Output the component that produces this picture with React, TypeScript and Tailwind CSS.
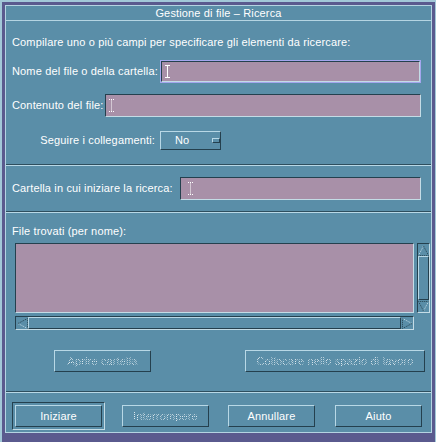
import React from 'react';

const raised = 'border border-t-[#b8d8e6] border-l-[#b8d8e6] border-r-[#24404e] border-b-[#24404e]';
const sunken = 'border border-t-[#24404e] border-l-[#24404e] border-r-[#c4dce6] border-b-[#c4dce6]';
const stipple =
  'bg-[image:repeating-conic-gradient(#dfeaf0_0%_25%,transparent_0%_50%)] bg-[length:2px_2px] bg-clip-text text-transparent';

function IBeam({ solid }: { solid?: boolean }) {
  return (
    <svg width="7" height="13" viewBox="0 0 7 13" className="shrink-0">
      <path
        d="M1 0.5H6M3.5 0.5V12.5M1 12.5H6"
        stroke="#ffffff"
        strokeWidth="1"
        strokeDasharray={solid ? undefined : '1 1'}
        fill="none"
      />
    </svg>
  );
}

function Field({ width, focused, pad = 'pl-[2px]' }: { width: string; focused?: boolean; pad?: string }) {
  const box = (
    <div className={`flex h-full w-full items-center bg-[#a890a8] ${pad} ${sunken}`}>
      <IBeam solid={focused} />
    </div>
  );
  if (focused) {
    return <div className={`h-[23px] ${width} border border-[#a4a6ee]`}>{box}</div>;
  }
  return <div className={`h-[23px] ${width}`}>{box}</div>;
}

function Arrow({ dir }: { dir: 'up' | 'down' | 'left' | 'right' }) {
  const rot =
    dir === 'up' ? '' : dir === 'down' ? 'rotate-180' : dir === 'left' ? '-rotate-90' : 'rotate-90';
  return (
    <svg width="11" height="11" viewBox="0 0 11 11" className={`shrink-0 ${rot}`}>
      <path d="M5.5 1L0.5 10.5" stroke="#c8e0ea" strokeDasharray="1 1" fill="none" />
      <path d="M5.5 1L10.5 10.5H0.5" stroke="#24404e" strokeDasharray="1 1" fill="none" />
    </svg>
  );
}

function Separator() {
  return <div className="h-[2px] shrink-0 border-t border-b border-t-[#2e4e5e] border-b-[#b8d8e6]" />;
}

function Button({ label, width, disabled }: { label: string; width: string; disabled?: boolean }) {
  return (
    <div className={`flex h-[22px] ${width} items-center justify-center ${raised}`}>
      <span className={disabled ? stipple : 'text-white'}>{label}</span>
    </div>
  );
}

export default function App() {
  return (
    <div className="h-[442px] w-[436px] border-l-2 border-t-2 border-r border-[#a2c8d8] bg-[#5a5a8e] pb-[9px] pl-[3px] pr-[3px] pt-[3px] font-['Liberation_Sans',Arial,sans-serif] text-[11px] tracking-[0.15px] text-white">
      <div className="flex h-full flex-col border border-[#b4d4e2] bg-[#5a8ea8]">
        <div className="h-[15px] shrink-0 border-b border-[#b4d4e2] text-center leading-[14px]">
          Gestione di file – Ricerca
        </div>

        <div className="flex flex-col pl-[6px]">
          <div className="mt-[14px] h-[14px] leading-[14px]">
            Compilare uno o più campi per specificare gli elementi da ricercare:
          </div>
          <div className="mt-[11px] flex h-[23px] items-center">
            <span className="w-[148px] shrink-0">Nome del file o della cartella:</span>
            <Field width="w-[261px]" focused />
          </div>
          <div className="mt-[11px] flex h-[23px] items-center">
            <span className="w-[93px] shrink-0">Contenuto del file:</span>
            <Field width="w-[316px]" />
          </div>
          <div className="mt-[14px] flex h-[19px] items-center">
            <span className="w-[148px] shrink-0 pr-[5px] text-right">Seguire i collegamenti:</span>
            <div className={`flex h-[19px] w-[61px] items-center ${raised}`}>
              <span className="ml-[14px] w-[30px]">No</span>
              <span className={`ml-[13px] h-[5px] w-[9px] ${raised}`} />
            </div>
          </div>
        </div>
        <div className="mt-[14px]">
          <Separator />
        </div>

        <div className="flex flex-col pl-[6px]">
          <div className="mt-[11px] flex h-[23px] items-center">
            <span className="w-[168px] shrink-0">Cartella in cui iniziare la ricerca:</span>
            <Field width="w-[241px]" pad="pl-[6px]" />
          </div>
        </div>
        <div className="mt-[11px]">
          <Separator />
        </div>

        <div className="flex flex-col pl-[6px]">
          <div className="mt-[11px] h-[14px] leading-[14px]">File trovati (per nome):</div>
          <div className="mt-[5px] flex h-[70px] pl-[3px]">
            <div className={`h-[70px] w-[399px] bg-[#a890a8] ${sunken}`} />
            <div className={`ml-[3px] flex h-[70px] w-[13px] flex-col ${sunken}`}>
              <div className="flex h-[12px] items-center justify-center">
                <Arrow dir="up" />
              </div>
              <div className={`flex-1 ${raised}`} />
              <div className="flex h-[12px] items-center justify-center">
                <Arrow dir="down" />
              </div>
            </div>
          </div>
          <div className={`ml-[3px] mt-[3px] flex h-[14px] w-[399px] ${sunken}`}>
            <div className="flex w-[12px] items-center justify-center">
              <Arrow dir="left" />
            </div>
            <div className={`flex-1 ${raised}`} />
            <div className="flex w-[12px] items-center justify-center">
              <Arrow dir="right" />
            </div>
          </div>
          <div className="mt-[20px] flex">
            <div className="ml-[42px]">
              <Button label="Aprire cartella" width="w-[97px]" disabled />
            </div>
            <div className="ml-[94px]">
              <Button label="Collocare nello spazio di lavoro" width="w-[180px]" disabled />
            </div>
          </div>
        </div>
        <div className="mt-[19px]">
          <Separator />
        </div>

        <div className="mt-[9px] flex items-center pl-[6px]">
          <div className={`h-[28px] w-[93px] p-[2px] ${sunken}`}>
            <Button label="Iniziare" width="w-[87px]" />
          </div>
          <div className="ml-[17px]">
            <Button label="Interrompere" width="w-[87px]" disabled />
          </div>
          <div className="ml-[19px]">
            <Button label="Annullare" width="w-[87px]" />
          </div>
          <div className="ml-[20px]">
            <Button label="Aiuto" width="w-[87px]" />
          </div>
        </div>
      </div>
    </div>
  );
}
